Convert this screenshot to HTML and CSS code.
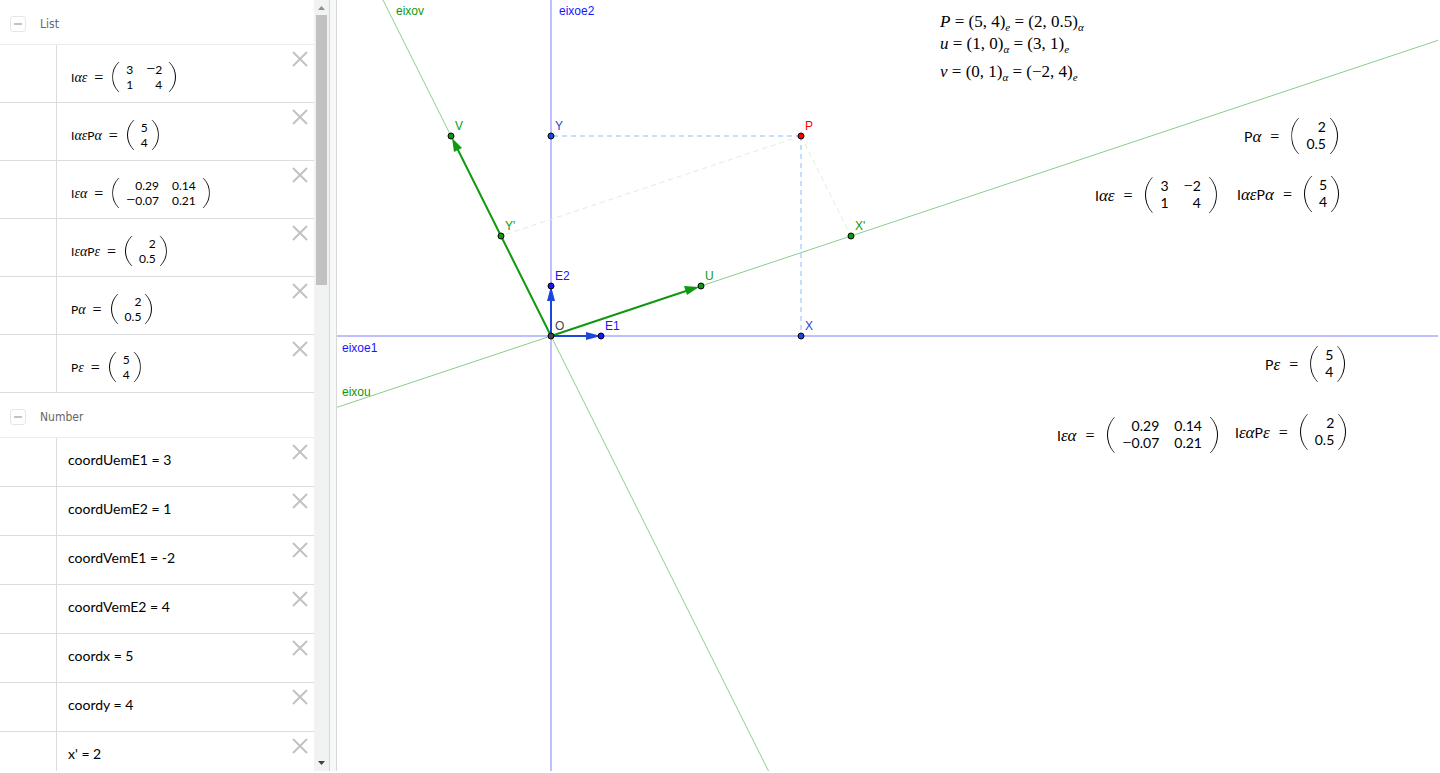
FILE: index.html
```html
<!DOCTYPE html>
<html lang="pt">
<head>
    <meta charset="UTF-8">
    <meta name="viewport" content="width=device-width, initial-scale=1.0">
    <title>Change of coordinates</title>
    <link rel="stylesheet" href="styles.css">
</head>
<body>
    <svg class="defs" aria-hidden="true">
        <symbol id="close" viewBox="0 0 16 16">
            <path d="M1 1 L15 15 M15 1 L1 15" fill="none" stroke="#c2c2c2" stroke-width="2"/>
        </symbol>
    </svg>

    <div class="app">
        <aside class="algebra">
            <div class="objects">
                <section>
                    <h2 class="group"><button class="toggle" aria-label="Collapse List"></button>List</h2>
                    <ul class="rows lists">
                        <li class="row">
                            <div class="value formula">
                                <span class="name">I<i>αε</i></span><span class="eq">=</span>
                                <span class="matrix two"><span>3</span><span><b>−</b>2</span><span>1</span><span>4</span></span>
                            </div>
                            <button class="close" aria-label="Delete"><svg><use href="#close"/></svg></button>
                        </li>
                        <li class="row">
                            <div class="value formula">
                                <span class="name">I<i>αε</i>P<i>α</i></span><span class="eq">=</span>
                                <span class="matrix"><span>5</span><span>4</span></span>
                            </div>
                            <button class="close" aria-label="Delete"><svg><use href="#close"/></svg></button>
                        </li>
                        <li class="row">
                            <div class="value formula">
                                <span class="name">I<i>εα</i></span><span class="eq">=</span>
                                <span class="matrix two"><span>0.29</span><span>0.14</span><span><b>−</b>0.07</span><span>0.21</span></span>
                            </div>
                            <button class="close" aria-label="Delete"><svg><use href="#close"/></svg></button>
                        </li>
                        <li class="row">
                            <div class="value formula">
                                <span class="name">I<i>εα</i>P<i>ε</i></span><span class="eq">=</span>
                                <span class="matrix"><span>2</span><span>0.5</span></span>
                            </div>
                            <button class="close" aria-label="Delete"><svg><use href="#close"/></svg></button>
                        </li>
                        <li class="row">
                            <div class="value formula">
                                <span class="name">P<i>α</i></span><span class="eq">=</span>
                                <span class="matrix"><span>2</span><span>0.5</span></span>
                            </div>
                            <button class="close" aria-label="Delete"><svg><use href="#close"/></svg></button>
                        </li>
                        <li class="row">
                            <div class="value formula">
                                <span class="name">P<i>ε</i></span><span class="eq">=</span>
                                <span class="matrix"><span>5</span><span>4</span></span>
                            </div>
                            <button class="close" aria-label="Delete"><svg><use href="#close"/></svg></button>
                        </li>
                    </ul>
                </section>
                <section>
                    <h2 class="group"><button class="toggle" aria-label="Collapse Number"></button>Number</h2>
                    <ul class="rows numbers">
                        <li class="row">
                            <div class="value">coordUemE1 = 3</div>
                            <button class="close" aria-label="Delete"><svg><use href="#close"/></svg></button>
                        </li>
                        <li class="row">
                            <div class="value">coordUemE2 = 1</div>
                            <button class="close" aria-label="Delete"><svg><use href="#close"/></svg></button>
                        </li>
                        <li class="row">
                            <div class="value">coordVemE1 = -2</div>
                            <button class="close" aria-label="Delete"><svg><use href="#close"/></svg></button>
                        </li>
                        <li class="row">
                            <div class="value">coordVemE2 = 4</div>
                            <button class="close" aria-label="Delete"><svg><use href="#close"/></svg></button>
                        </li>
                        <li class="row">
                            <div class="value">coordx = 5</div>
                            <button class="close" aria-label="Delete"><svg><use href="#close"/></svg></button>
                        </li>
                        <li class="row">
                            <div class="value">coordy = 4</div>
                            <button class="close" aria-label="Delete"><svg><use href="#close"/></svg></button>
                        </li>
                        <li class="row">
                            <div class="value">x' = 2</div>
                            <button class="close" aria-label="Delete"><svg><use href="#close"/></svg></button>
                        </li>
                    </ul>
                </section>
            </div>
            <div class="scrollbar">
                <svg class="arrow" viewBox="0 0 15 15"><path d="M4 10 L11 10 L7.5 6 Z" fill="#8f8f8f"/></svg>
                <div class="thumb"></div>
                <svg class="arrow last" viewBox="0 0 15 15"><path d="M4 5 L11 5 L7.5 9 Z" fill="#404040"/></svg>
            </div>
        </aside>
        <div class="splitter"></div>

        <main class="graphics">
            <svg class="plot">
                <!-- axes e1, e2 -->
                <g class="axis">
                    <line x1="0" y1="336" x2="4000" y2="336"/>
                    <line x1="214" y1="0" x2="214" y2="4000"/>
                </g>
                <!-- axes u, v -->
                <g class="axis-uv">
                    <line x1="-86" y1="436" x2="3214" y2="-664"/>
                    <line x1="14" y1="-64" x2="1214" y2="2336"/>
                </g>
                <!-- projections of P -->
                <g class="proj">
                    <line x1="464" y1="136" x2="214" y2="136"/>
                    <line x1="464" y1="136" x2="464" y2="336"/>
                </g>
                <g class="proj-uv">
                    <line x1="464" y1="136" x2="164" y2="236"/>
                    <line x1="464" y1="136" x2="514" y2="236"/>
                </g>
                <!-- vectors -->
                <g class="vec-uv">
                    <line x1="214" y1="336" x2="352" y2="290"/>
                    <line x1="214" y1="336" x2="119" y2="146"/>
                    <path d="M362 287 L350 295 L347 286 Z"/>
                    <path d="M115 138 L125 148 L117 152 Z"/>
                </g>
                <g class="vec">
                    <line x1="214" y1="336" x2="252" y2="336"/>
                    <line x1="214" y1="336" x2="214" y2="298"/>
                    <path d="M264 336 L249 340 L249 332 Z"/>
                    <path d="M214 286 L218 301 L210 301 Z"/>
                </g>
                <g class="points">
                    <circle class="o" cx="214" cy="336" r="3"/>
                    <circle class="e" cx="264" cy="336" r="3"/>
                    <circle class="e" cx="214" cy="286" r="3"/>
                    <circle class="xy" cx="464" cy="336" r="3"/>
                    <circle class="xy" cx="214" cy="136" r="3"/>
                    <circle class="uv" cx="364" cy="286" r="3"/>
                    <circle class="uv" cx="114" cy="136" r="3"/>
                    <circle class="uv" cx="514" cy="236" r="3"/>
                    <circle class="uv" cx="164" cy="236" r="3"/>
                    <circle class="p" cx="464" cy="136" r="3"/>
                </g>
                <g class="labels">
                    <text class="uv" x="59" y="15">eixov</text>
                    <text class="e" x="222" y="15">eixoe2</text>
                    <text class="e" x="5" y="352">eixoe1</text>
                    <text class="uv" x="5" y="396">eixou</text>
                    <text class="o" x="218" y="330">O</text>
                    <text class="e" x="268" y="330">E1</text>
                    <text class="e" x="218" y="280">E2</text>
                    <text class="xy" x="468" y="330">X</text>
                    <text class="xy" x="218" y="130">Y</text>
                    <text class="uv" x="368" y="280">U</text>
                    <text class="uv" x="118" y="130">V</text>
                    <text class="uv" x="518" y="230">X'</text>
                    <text class="uv" x="168" y="230">Y'</text>
                    <text class="p" x="468" y="130">P</text>
                </g>
            </svg>

            <div class="math eq-p"><i>P</i> = (5, 4)<sub><i>e</i></sub> = (2, 0.5)<sub><i>α</i></sub></div>
            <div class="math eq-u"><i>u</i> = (1, 0)<sub><i>α</i></sub> = (3, 1)<sub><i>e</i></sub></div>
            <div class="math eq-v"><i>v</i> = (0, 1)<sub><i>α</i></sub> = (−2, 4)<sub><i>e</i></sub></div>

            <div class="formula big p-alpha">
                <span class="name">P<i>α</i></span><span class="eq">=</span>
                <span class="matrix"><span>2</span><span>0.5</span></span>
            </div>
            <div class="formula big i-ae">
                <span class="name">I<i>αε</i></span><span class="eq">=</span>
                <span class="matrix two"><span>3</span><span><b>−</b>2</span><span>1</span><span>4</span></span>
            </div>
            <div class="formula big i-ae-p">
                <span class="name">I<i>αε</i>P<i>α</i></span><span class="eq">=</span>
                <span class="matrix"><span>5</span><span>4</span></span>
            </div>
            <div class="formula big p-eps">
                <span class="name">P<i>ε</i></span><span class="eq">=</span>
                <span class="matrix"><span>5</span><span>4</span></span>
            </div>
            <div class="formula big i-ea">
                <span class="name">I<i>εα</i></span><span class="eq">=</span>
                <span class="matrix two"><span>0.29</span><span>0.14</span><span><b>−</b>0.07</span><span>0.21</span></span>
            </div>
            <div class="formula big i-ea-p">
                <span class="name">I<i>εα</i>P<i>ε</i></span><span class="eq">=</span>
                <span class="matrix"><span>2</span><span>0.5</span></span>
            </div>
        </main>
    </div>
</body>
</html>
```
FILE: styles.css
```css
*,
*::before,
*::after {
    margin: 0;
    padding: 0;
    box-sizing: border-box;
}

body {
    height: 100vh;
    padding: 0 2px 2px 0;
    overflow: hidden;
    background: #fff;
    color: #000;
    font-family: Lato, "Liberation Sans", sans-serif;
}

.defs {
    display: none;
}

.app {
    display: flex;
    height: 100%;
}

/* Algebra view */
.algebra {
    display: flex;
    flex: 0 0 330px;
    border-right: 1px solid #d8d8d8;
}

.objects {
    flex: 1;
    overflow: hidden;
}

.group {
    display: flex;
    align-items: center;
    gap: 14px;
    height: 45px;
    padding: 4px 10px 0;
    border-bottom: 1px solid #ececec;
    color: #666;
    font-family: "DejaVu Sans Condensed", "DejaVu Sans", sans-serif;
    font-stretch: condensed;
    font-size: 12px;
    font-weight: normal;
}

.toggle {
    display: flex;
    align-items: center;
    justify-content: center;
    width: 16px;
    height: 16px;
    background: #fff;
    border: 1px solid #e6e6e6;
    border-radius: 3px;
}

.toggle::before {
    content: "";
    width: 8px;
    height: 2px;
    background: #c2c2c2;
}

.rows {
    list-style: none;
}

.row {
    display: flex;
    border-bottom: 1px solid #dcdcdc;
}

.row::before {
    content: "";
    flex: 0 0 57px;
    border-right: 1px solid #dcdcdc;
}

.lists .row {
    height: 58px;
}

.numbers .row {
    height: 49px;
}

.value {
    flex: 1;
    padding: 12px 0 0 11px;
    font-size: 14px;
    line-height: 20px;
}

.value.formula {
    padding: 7px 0 0 14px;
}

.close {
    width: 16px;
    height: 16px;
    margin: 6px 6px 0 0;
    background: none;
    border: 0;
}

.close svg {
    display: block;
    width: 16px;
    height: 16px;
}

.scrollbar {
    display: flex;
    flex-direction: column;
    flex: 0 0 15px;
    background: #f0f3f2;
}

.arrow {
    width: 15px;
    height: 15px;
}

.arrow.last {
    margin-top: auto;
}

.thumb {
    height: 35%;
    margin: 0 2px;
    background: #c1c1c1;
}

.splitter {
    flex: 0 0 7px;
    background: #f8f8f8;
    border-right: 1px solid #d8d8d8;
}

/* Matrices */
.formula {
    display: flex;
    align-items: center;
    font-size: 12px;
    line-height: 15px;
}

.formula i {
    font-family: "Liberation Serif", serif;
    font-size: 14px;
}

.eq {
    margin: 0 9px 0 7px;
    font-family: "Liberation Serif", serif;
    font-size: 16px;
}

.matrix {
    position: relative;
    display: grid;
    column-gap: 13px;
    padding: 0 11px 0 14px;
    text-align: right;
}

.matrix.two {
    grid-template-columns: auto auto;
    padding: 0 14px;
}

.matrix b {
    font-family: "Liberation Serif", serif;
    font-size: 16px;
    font-weight: normal;
    line-height: 0;
}

/* parentheses: the outer slice of a taller ellipse */
.matrix::before,
.matrix::after {
    content: "";
    position: absolute;
    top: -5px;
    bottom: -5px;
    width: 20px;
}

.matrix::before {
    left: 0;
    border-left: 1px solid #000;
    border-radius: 100% 0 0 100% / 50% 0 0 50%;
    clip-path: inset(5px 12px 5px 0);
}

.matrix::after {
    right: 0;
    border-right: 1px solid #000;
    border-radius: 0 100% 100% 0 / 0 50% 50% 0;
    clip-path: inset(5px 0 5px 12px);
}

.formula.big {
    position: absolute;
    font-size: 14px;
    line-height: 17px;
}

.big i {
    font-size: 17px;
}

.big .eq {
    margin: 0 12px 0 9px;
}

.big .matrix {
    column-gap: 15px;
    padding: 0 12px 2px 15px;
}

.big .matrix.two {
    padding: 0 16px 2px;
}

/* Graphics view */
.graphics {
    position: relative;
    flex: 1;
    overflow: hidden;
}

.plot {
    display: block;
    width: 100%;
    height: 100%;
}

.axis {
    stroke: #bfbfff;
    stroke-width: 2;
}

.axis-uv {
    stroke: #8ad08a;
    stroke-width: 1;
}

.proj {
    stroke: #bfe0ff;
    stroke-width: 2;
    stroke-dasharray: 5 4;
}

.proj-uv {
    stroke: #dcefdc;
    stroke-width: 1;
    stroke-dasharray: 5 4;
}

.vec-uv {
    stroke: #0f990f;
    stroke-width: 2;
    fill: #0f990f;
}

.vec {
    stroke: #1c46dc;
    stroke-width: 2;
    fill: #1c46dc;
}

.vec path,
.vec-uv path {
    stroke: none;
}

.points {
    stroke: #000;
    stroke-width: 1;
}

.labels {
    font-family: "Liberation Sans", Arial, sans-serif;
    font-size: 12px;
}

.o {
    fill: #444;
}

.e {
    fill: #1515ff;
}

.xy {
    fill: #1c46dc;
}

.uv {
    fill: #0f990f;
}

.p {
    fill: #f00;
}

.math {
    position: absolute;
    left: 603px;
    font-family: "Liberation Serif", serif;
    font-size: 17px;
    line-height: 20px;
    white-space: nowrap;
}

.math sub {
    font-size: 11px;
    line-height: 0;
}

.eq-p {
    top: 12px;
}

.eq-u {
    top: 34px;
}

.eq-v {
    top: 62px;
}

.p-alpha {
    left: 907px;
    top: 118px;
}

.i-ae {
    left: 758px;
    top: 177px;
}

.i-ae-p {
    left: 900px;
    top: 176px;
}

.p-eps {
    left: 928px;
    top: 346px;
}

.i-ea {
    left: 720px;
    top: 417px;
}

.i-ea-p {
    left: 898px;
    top: 414px;
}
```
